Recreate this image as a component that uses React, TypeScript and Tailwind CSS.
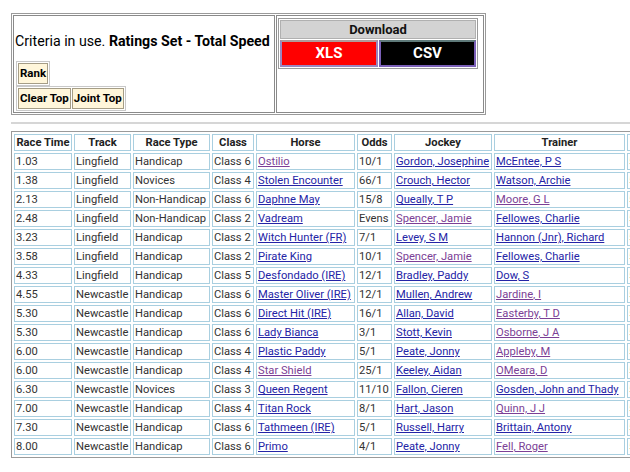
import React from "react";

type Row = {
  t: string;
  track: string;
  type: string;
  cls: string;
  horse: string;
  hv?: boolean;
  odds: string;
  jockey: string;
  jv?: boolean;
  trainer: string;
  tv?: boolean;
  last: string;
};

const rows: Row[] = [
  { t: "1.03", track: "Lingfield", type: "Handicap", cls: "Class 6", horse: "Ostilio", hv: true, odds: "10/1", jockey: "Gordon, Josephine", trainer: "McEntee, P S", last: "56" },
  { t: "1.38", track: "Lingfield", type: "Novices", cls: "Class 4", horse: "Stolen Encounter", odds: "66/1", jockey: "Crouch, Hector", trainer: "Watson, Archie", last: "52" },
  { t: "2.13", track: "Lingfield", type: "Non-Handicap", cls: "Class 6", horse: "Daphne May", odds: "15/8", jockey: "Queally, T P", trainer: "Moore, G L", tv: true, last: "58" },
  { t: "2.48", track: "Lingfield", type: "Non-Handicap", cls: "Class 2", horse: "Vadream", odds: "Evens", jockey: "Spencer, Jamie", jv: true, trainer: "Fellowes, Charlie", last: "55" },
  { t: "3.23", track: "Lingfield", type: "Handicap", cls: "Class 2", horse: "Witch Hunter (FR)", odds: "7/1", jockey: "Levey, S M", trainer: "Hannon (Jnr), Richard", last: "54" },
  { t: "3.58", track: "Lingfield", type: "Handicap", cls: "Class 2", horse: "Pirate King", odds: "10/1", jockey: "Spencer, Jamie", jv: true, trainer: "Fellowes, Charlie", last: "57" },
  { t: "4.33", track: "Lingfield", type: "Handicap", cls: "Class 5", horse: "Desfondado (IRE)", odds: "12/1", jockey: "Bradley, Paddy", trainer: "Dow, S", last: "53" },
  { t: "4.55", track: "Newcastle", type: "Handicap", cls: "Class 6", horse: "Master Oliver (IRE)", odds: "12/1", jockey: "Mullen, Andrew", trainer: "Jardine, I", tv: true, last: "51" },
  { t: "5.30", track: "Newcastle", type: "Handicap", cls: "Class 6", horse: "Direct Hit (IRE)", odds: "16/1", jockey: "Allan, David", trainer: "Easterby, T D", tv: true, last: "55" },
  { t: "5.30", track: "Newcastle", type: "Handicap", cls: "Class 6", horse: "Lady Bianca", odds: "3/1", jockey: "Stott, Kevin", trainer: "Osborne, J A", tv: true, last: "56" },
  { t: "6.00", track: "Newcastle", type: "Handicap", cls: "Class 4", horse: "Plastic Paddy", odds: "5/1", jockey: "Peate, Jonny", trainer: "Appleby, M", tv: true, last: "54" },
  { t: "6.00", track: "Newcastle", type: "Handicap", cls: "Class 4", horse: "Star Shield", hv: true, odds: "25/1", jockey: "Keeley, Aidan", trainer: "OMeara, D", tv: true, last: "52" },
  { t: "6.30", track: "Newcastle", type: "Novices", cls: "Class 3", horse: "Queen Regent", odds: "11/10", jockey: "Fallon, Cieren", trainer: "Gosden, John and Thady", last: "58" },
  { t: "7.00", track: "Newcastle", type: "Handicap", cls: "Class 4", horse: "Titan Rock", odds: "8/1", jockey: "Hart, Jason", trainer: "Quinn, J J", tv: true, last: "53" },
  { t: "7.30", track: "Newcastle", type: "Handicap", cls: "Class 6", horse: "Tathmeen (IRE)", odds: "5/1", jockey: "Russell, Harry", trainer: "Brittain, Antony", last: "57" },
  { t: "8.00", track: "Newcastle", type: "Handicap", cls: "Class 6", horse: "Primo", odds: "4/1", jockey: "Peate, Jonny", trainer: "Fell, Roger", tv: true, last: "55" },
];

const td =
  "border border-[#a9cfe0] px-[1px] py-0 h-[17px] leading-[15px] whitespace-nowrap text-left align-middle";
const th =
  "border border-[#a9cfe0] px-[1px] py-0 h-[17px] leading-[15px] whitespace-nowrap text-center font-bold text-[#222]";

function L({ v, children }: { v?: boolean; children: React.ReactNode }) {
  return (
    <span className={v ? "underline text-[#7b3f96]" : "underline text-[#2424a6]"}>
      {children}
    </span>
  );
}

function Btn({ children }: { children: React.ReactNode }) {
  return (
    <td className="border border-[#a59d86] bg-[#fff6da] px-[1px] h-[21px] text-[11.5px] leading-[15px] font-bold text-black whitespace-nowrap">
      {children}
    </td>
  );
}

export default function App() {
  return (
    <div
      className="w-[630px] h-[472px] overflow-hidden bg-white"
      style={{ fontFamily: "Roboto, 'Liberation Sans', sans-serif" }}
    >
      <div className="w-[700px] pl-[11px] pt-[13px]">
        {/* Top criteria / download box */}
        <table className="border border-[#9a9a9a] border-separate border-spacing-[1px] w-[475px] h-[100px]">
          <tbody>
            <tr>
              <td className="border border-[#8a8a8a] w-[262px] align-top p-[1px]">
                <p className="mt-[16px] mb-[11px] text-[14.2px] leading-[17px] text-black whitespace-nowrap">
                  Criteria in use. <b>Ratings Set - Total Speed</b>
                </p>
                <table className="border border-[#c8c8c8] border-separate border-spacing-[1px] ml-[1px]">
                  <tbody>
                    <tr>
                      <Btn>Rank</Btn>
                    </tr>
                  </tbody>
                </table>
                <table className="border border-[#c8c8c8] border-separate border-spacing-[1px] ml-[1px]">
                  <tbody>
                    <tr>
                      <Btn>Clear Top</Btn>
                      <Btn>Joint Top</Btn>
                    </tr>
                  </tbody>
                </table>
              </td>
              <td className="border border-[#8a8a8a] align-top p-[1px]">
                <table className="border border-[#9a9a9a] border-separate border-spacing-[1px] w-[200px] mt-[1px]">
                  <tbody>
                    <tr>
                      <td
                        colSpan={2}
                        className="bg-[#d3d3d3] border border-[#b0b0b0] h-[19px] text-center text-[13px] leading-[15px] font-bold text-[#111]"
                      >
                        Download
                      </td>
                    </tr>
                    <tr>
                      <td className="bg-[#ff0000] border-2 border-[#9a86bf] border-t-[#b09a9a] h-[27px] w-[98px] text-center text-[15px] leading-[17px] font-bold text-white">
                        XLS
                      </td>
                      <td className="bg-black border-2 border-[#7a5fb8] border-t-[#5f7a7a] h-[27px] text-center text-[15px] leading-[17px] font-bold text-white">
                        CSV
                      </td>
                    </tr>
                  </tbody>
                </table>
              </td>
            </tr>
          </tbody>
        </table>

        <div className="mt-[7px] border-t-2 border-[#d6d6d6]" />

        {/* Results table */}
        <table className="mt-[7px] border border-[#9a9a9a] border-separate border-spacing-[2px] text-[11.2px] text-[#333]">
          <thead>
            <tr>
              <th className={`${th} w-[58px]`}>Race Time</th>
              <th className={`${th} w-[57px]`}>Track</th>
              <th className={`${th} w-[77px]`}>Race Type</th>
              <th className={`${th} w-[42px]`}>Class</th>
              <th className={`${th} w-[99px]`}>Horse</th>
              <th className={`${th} w-[35px]`}>Odds</th>
              <th className={`${th} w-[98px]`}>Jockey</th>
              <th className={`${th} w-[131px]`}>Trainer</th>
              <th className={`${th} w-[41px]`}>Speed</th>
            </tr>
          </thead>
          <tbody>
            {rows.map((r, i) => (
              <tr key={i}>
                <td className={td}>{r.t}</td>
                <td className={td}>{r.track}</td>
                <td className={td}>{r.type}</td>
                <td className={td}>{r.cls}</td>
                <td className={td}>
                  <L v={r.hv}>{r.horse}</L>
                </td>
                <td className={td}>{r.odds}</td>
                <td className={td}>
                  <L v={r.jv}>{r.jockey}</L>
                </td>
                <td className={td}>
                  <L v={r.tv}>{r.trainer}</L>
                </td>
                <td className={td}>{r.last}</td>
              </tr>
            ))}
          </tbody>
        </table>
      </div>
    </div>
  );
}
